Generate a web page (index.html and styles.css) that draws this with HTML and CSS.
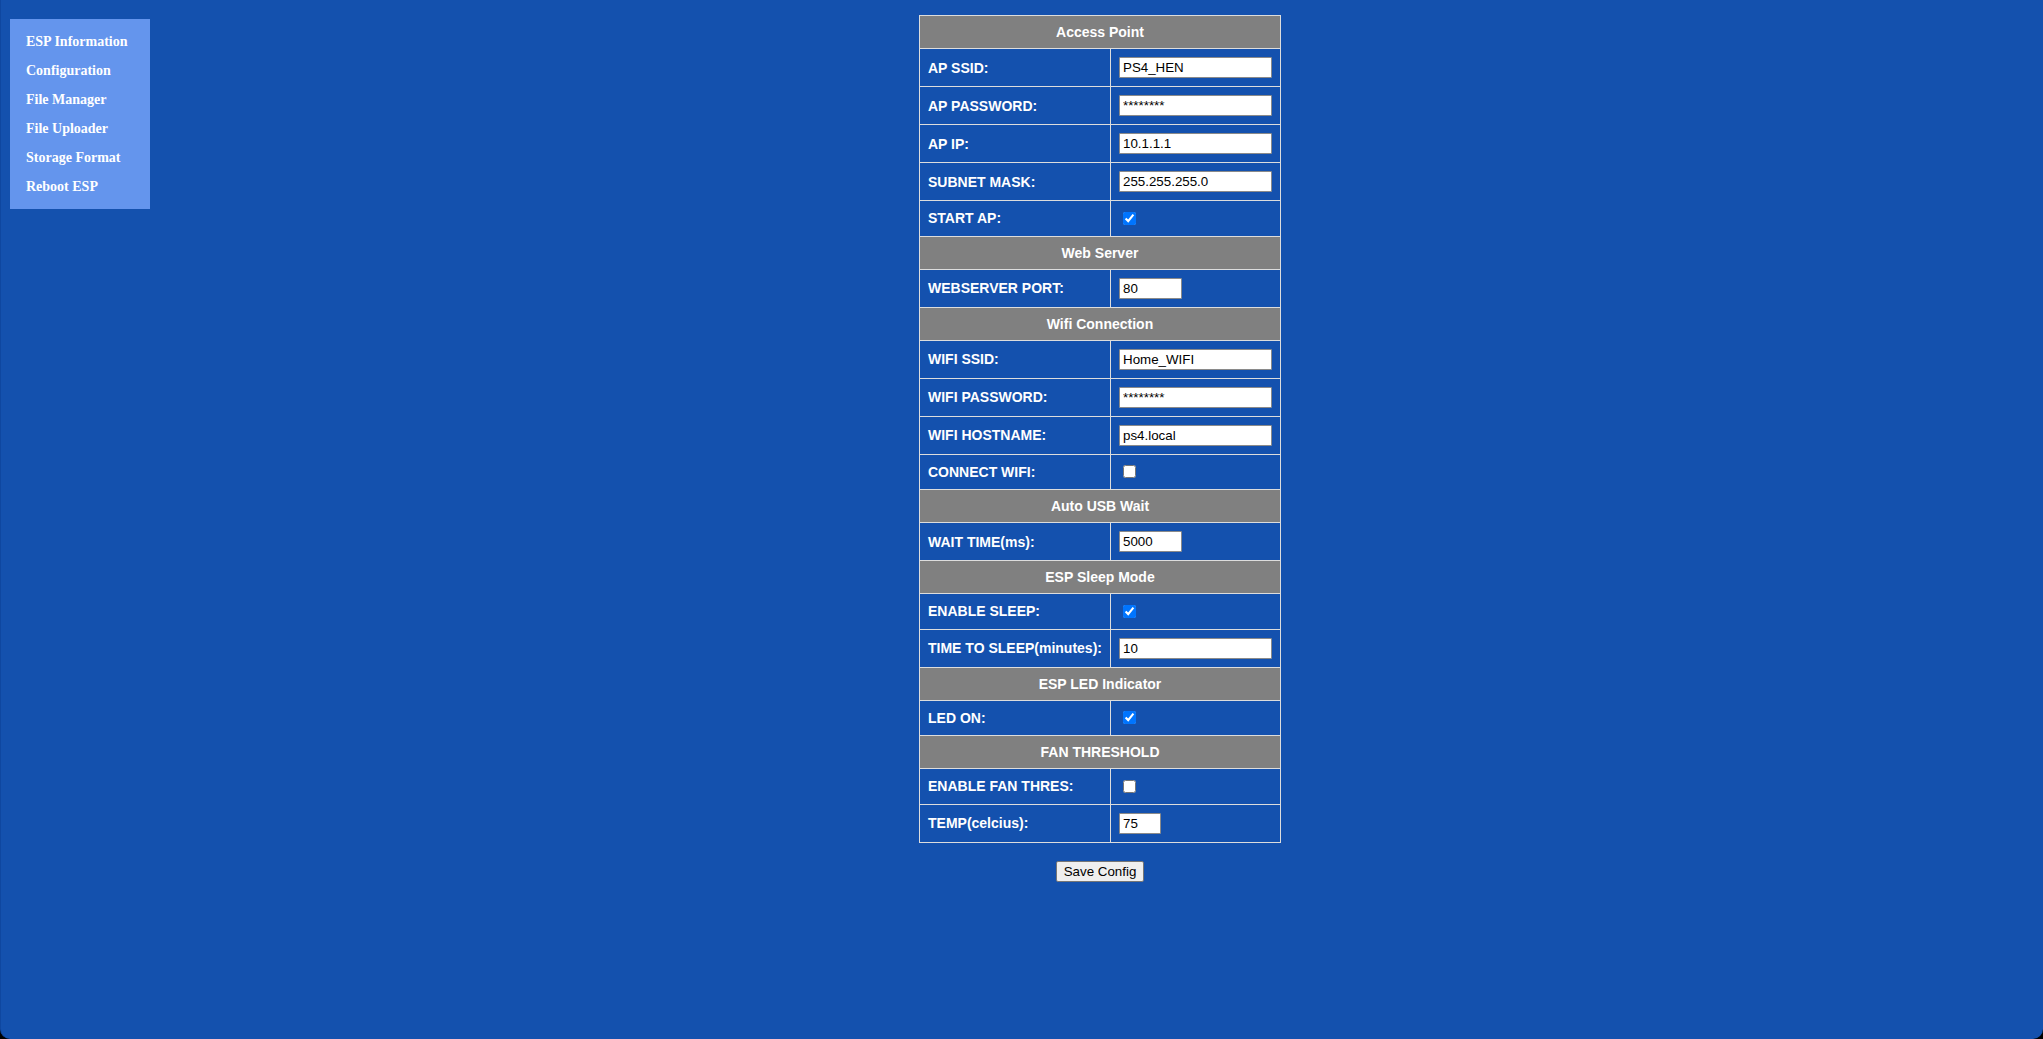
FILE: index.html
```html
<!DOCTYPE html>
<html>
<head>
<meta charset="utf-8">
<title>Config Editor</title>
<link rel="stylesheet" href="styles.css">
</head>
<body>
<nav class="sidenav">
  <a href="#">ESP Information</a>
  <a href="#">Configuration</a>
  <a href="#">File Manager</a>
  <a href="#">File Uploader</a>
  <a href="#">Storage Format</a>
  <a href="#">Reboot ESP</a>
</nav>
<main class="main">
  <form class="config-form">
    <table class="config">
      <tr><th colspan="2">Access Point</th></tr>
      <tr><td class="lbl">AP SSID:</td><td><input class="txt" type="text" value="PS4_HEN"></td></tr>
      <tr><td class="lbl">AP PASSWORD:</td><td><input class="txt" type="text" value="********"></td></tr>
      <tr><td class="lbl">AP IP:</td><td><input class="txt" type="text" value="10.1.1.1"></td></tr>
      <tr><td class="lbl">SUBNET MASK:</td><td><input class="txt" type="text" value="255.255.255.0"></td></tr>
      <tr class="chkrow"><td class="lbl">START AP:</td><td><input class="chk" type="checkbox" checked></td></tr>
      <tr><th colspan="2">Web Server</th></tr>
      <tr><td class="lbl">WEBSERVER PORT:</td><td><input class="txt w5" type="text" value="80"></td></tr>
      <tr><th colspan="2">Wifi Connection</th></tr>
      <tr><td class="lbl">WIFI SSID:</td><td><input class="txt" type="text" value="Home_WIFI"></td></tr>
      <tr><td class="lbl">WIFI PASSWORD:</td><td><input class="txt" type="text" value="********"></td></tr>
      <tr><td class="lbl">WIFI HOSTNAME:</td><td><input class="txt" type="text" value="ps4.local"></td></tr>
      <tr class="chkrow"><td class="lbl">CONNECT WIFI:</td><td><input class="chk" type="checkbox"></td></tr>
      <tr><th colspan="2">Auto USB Wait</th></tr>
      <tr><td class="lbl">WAIT TIME(ms):</td><td><input class="txt w5" type="text" value="5000"></td></tr>
      <tr><th colspan="2">ESP Sleep Mode</th></tr>
      <tr class="chkrow"><td class="lbl">ENABLE SLEEP:</td><td><input class="chk" type="checkbox" checked></td></tr>
      <tr><td class="lbl">TIME TO SLEEP(minutes):</td><td><input class="txt" type="text" value="10"></td></tr>
      <tr><th colspan="2">ESP LED Indicator</th></tr>
      <tr class="chkrow"><td class="lbl">LED ON:</td><td><input class="chk" type="checkbox" checked></td></tr>
      <tr><th colspan="2">FAN THRESHOLD</th></tr>
      <tr class="chkrow"><td class="lbl">ENABLE FAN THRES:</td><td><input class="chk" type="checkbox"></td></tr>
      <tr><td class="lbl">TEMP(celcius):</td><td><input class="txt w3" type="text" value="75"></td></tr>
    </table>
    <div class="actions"><button class="save" type="button">Save Config</button></div>
  </form>
</main>
</body>
</html>
```
FILE: styles.css
```css
html {
  background: #000;
  height: 100%;
}
body {
  margin: 0;
  min-height: 100%;
  background-color: #1451ae;
  color: #ffffff;
  font-family: "Liberation Serif", "Times New Roman", serif;
  font-size: 14px;
  font-weight: bold;
  border-bottom-left-radius: 10px;
  border-bottom-right-radius: 10px;
  box-sizing: border-box;
  border-left: 1px solid #0f47a0;
}
.sidenav {
  position: fixed;
  top: 19px;
  left: 10px;
  width: 140px;
  background: #6495ed;
  padding: 8px 0;
}
.sidenav a {
  display: block;
  padding: 6px 8px 6px 16px;
  line-height: 17px;
  font-size: 14px;
  color: #ffffff;
  text-decoration: none;
}
.main {
  margin-left: 156px;
  padding-top: 15px;
  display: flex;
  justify-content: center;
}
.config-form {
  display: flex;
  flex-direction: column;
  align-items: center;
}
.config {
  font-family: "Liberation Sans", Arial, sans-serif;
  border-collapse: collapse;
  font-size: 14px;
  color: #fff;
}
.config th,
.config td {
  border: 1px solid #dddddd;
  padding: 8px;
  line-height: 16px;
  text-align: left;
}
.config th {
  background-color: #808080;
  text-align: center;
}
.config td.lbl {
  width: 174px;
}
.config td:last-child {
  width: 153px;
}
.txt {
  box-sizing: border-box;
  width: 153px;
  height: 21px;
  margin: 0;
  padding: 1px 3px;
  border: 1px solid #8a8a8a;
  border-radius: 1px;
  font-family: "Liberation Sans", Arial, sans-serif;
  font-size: 13.333px;
  font-weight: normal;
  color: #000;
  background: #fff;
  vertical-align: middle;
}
.txt.w5 { width: 63px; }
.txt.w3 { width: 42px; }
.chk {
  width: 13px;
  height: 13px;
  margin: 2.75px 3px 2.75px 4px;
  vertical-align: middle;
}
.actions {
  margin-top: 18px;
}
.save {
  font-family: "Liberation Sans", Arial, sans-serif;
  font-size: 13.333px;
  font-weight: normal;
  color: #000;
  height: 21px;
  padding: 1px 7px;
  background: #efefef;
  border: 1px solid #767676;
  border-radius: 2px;
}
```
